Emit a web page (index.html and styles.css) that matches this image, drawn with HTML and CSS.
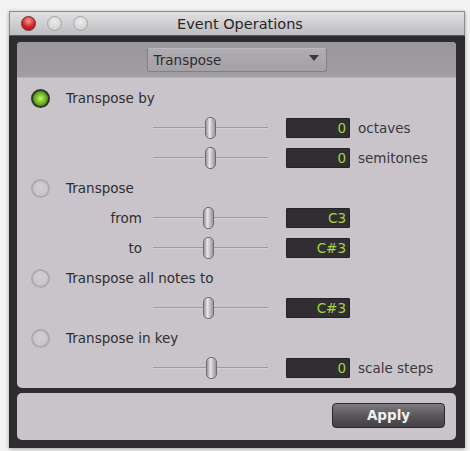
FILE: index.html
```html
<!DOCTYPE html>
<html>
<head>
<meta charset="utf-8">
<link rel="stylesheet" href="styles.css">
</head>
<body>
<div class="window">
  <div class="titlebar">
    <div class="lights">
      <span class="light red"></span>
      <span class="light"></span>
      <span class="light"></span>
    </div>
    <div class="title">Event Operations</div>
  </div>
  <div class="frame">
    <div class="panel">
      <div class="toolbar">
        <div class="dropdown"><span>Transpose</span><span class="arrow"></span></div>
      </div>
      <div class="rows">
        <div class="row head"><span class="radio on"></span><span class="hlabel">Transpose by</span></div>
        <div class="row ctl"><span class="lbl"></span><span class="slider"><span class="thumb"></span></span><span class="val">0</span><span class="unit">octaves</span></div>
        <div class="row ctl"><span class="lbl"></span><span class="slider"><span class="thumb"></span></span><span class="val">0</span><span class="unit">semitones</span></div>
        <div class="row head"><span class="radio"></span><span class="hlabel">Transpose</span></div>
        <div class="row ctl"><span class="lbl">from</span><span class="slider"><span class="thumb t2"></span></span><span class="val">C3</span><span class="unit"></span></div>
        <div class="row ctl"><span class="lbl">to</span><span class="slider"><span class="thumb t2"></span></span><span class="val">C#3</span><span class="unit"></span></div>
        <div class="row head"><span class="radio"></span><span class="hlabel">Transpose all notes to</span></div>
        <div class="row ctl"><span class="lbl"></span><span class="slider"><span class="thumb t2"></span></span><span class="val">C#3</span><span class="unit"></span></div>
        <div class="row head"><span class="radio"></span><span class="hlabel">Transpose in key</span></div>
        <div class="row ctl"><span class="lbl"></span><span class="slider"><span class="thumb t3"></span></span><span class="val">0</span><span class="unit">scale steps</span></div>
      </div>
    </div>
    <div class="footer">
      <button class="apply">Apply</button>
    </div>
  </div>
</div>
</body>
</html>
```

FILE: styles.css
```css
html, body {
  margin: 0;
  padding: 0;
  background: #f3f3f3;
}
body {
  font-family: "DejaVu Sans", "Liberation Sans", sans-serif;
  width: 470px;
  height: 451px;
  overflow: hidden;
}
.window {
  margin: 11px 0 0 9px;
  width: 456px;
  box-shadow: 0 1px 4px rgba(0,0,0,0.35);
}
.titlebar {
  height: 25px;
  box-sizing: border-box;
  border: 1px solid #8c8c8e;
  border-bottom: 1px solid #5a595c;
  background: linear-gradient(#e0dfe1, #bebdc0);
  display: flex;
  align-items: center;
}
.lights {
  display: flex;
  gap: 11px;
  padding-left: 11px;
}
.light {
  width: 15px;
  height: 15px;
  border-radius: 50%;
  background: radial-gradient(circle at 50% 35%, #eeeeee, #c6c5c8);
  border: 1px solid #a5a4a7;
  box-sizing: border-box;
}
.light.red {
  background: radial-gradient(circle at 50% 30%, #ff9a9a, #d0222a 55%, #a31218);
  border-color: #7d2a2c;
}
.title {
  flex: 1;
  text-align: center;
  font-size: 14.5px;
  color: #262528;
  margin-right: 72px;
}
.frame {
  background: #2e2c30;
  padding: 6px 9px 8px 8px;
}
.panel {
  background: #c8c4c9;
  border-radius: 4px 4px 5px 5px;
  overflow: hidden;
}
.toolbar {
  height: 35px;
  background: linear-gradient(#9a979c, #a09da3);
  border-bottom: 1px solid #b6b2b7;
  display: flex;
  align-items: center;
  justify-content: center;
}
.dropdown {
  width: 180px;
  height: 24px;
  box-sizing: border-box;
  border: 1px solid #828085;
  border-top-color: #bcb9be;
  border-radius: 3px;
  background: linear-gradient(#b0adb2, #a4a1a6);
  display: flex;
  align-items: center;
  justify-content: space-between;
  padding: 0 7px 0 6px;
  font-size: 13.5px;
  color: #2e2c30;
}
.arrow {
  width: 0;
  height: 0;
  border-left: 5px solid transparent;
  border-right: 5px solid transparent;
  border-top: 6px solid #3b393e;
  margin-top: -4px;
}
.rows {
  padding: 5px 0 5px 0;
  display: flex;
  flex-direction: column;
}
.row {
  height: 30px;
  display: flex;
  align-items: center;
}
.head {
  padding-left: 14px;
}
.radio {
  width: 19px;
  height: 19px;
  border-radius: 50%;
  box-sizing: border-box;
  border: 2px solid #aeaab0;
  background: radial-gradient(circle at 50% 40%, #d2ced3, #c4c0c5);
}
.radio.on {
  border: 2px solid #2e3a22;
  background: radial-gradient(circle, #c4f07a 0, #84cc2e 35%, #55901c 70%, #36521c 100%);
}
.hlabel {
  margin-left: 16px;
  font-size: 13.5px;
  color: #2f2d31;
}
.lbl {
  width: 125px;
  text-align: right;
  font-size: 13.5px;
  color: #2f2d31;
}
.slider {
  margin-left: 11px;
  width: 115px;
  height: 22px;
  position: relative;
  background: linear-gradient(transparent 10px, #9e9aa1 10px, #9e9aa1 11px, #d3cfd4 11px, #d3cfd4 12px, transparent 12px);
}
.thumb {
  position: absolute;
  left: 52px;
  top: 0;
  width: 11px;
  height: 22px;
  box-sizing: border-box;
  border: 1px solid #6e6b71;
  border-radius: 5px;
  background: linear-gradient(90deg, #9c999e, #e8e5e9 40%, #c9c6cb 60%, #9a979c);
}
.thumb.t2 { left: 50px; }
.thumb.t3 { left: 53px; }
.val {
  margin-left: 18px;
  width: 64px;
  height: 20px;
  box-sizing: border-box;
  background: #302e33;
  border: 1px solid #242226;
  border-radius: 1px;
  color: #a6d244;
  font-size: 13.5px;
  text-align: right;
  padding-right: 3px;
  line-height: 19px;
}
.unit {
  margin-left: 8px;
  font-size: 13.5px;
  color: #3a383c;
}
.footer {
  margin-top: 5px;
  height: 47px;
  background: #c8c4c9;
  border-radius: 5px;
  display: flex;
  align-items: center;
  justify-content: flex-end;
  padding-right: 11px;
}
.apply {
  width: 113px;
  height: 25px;
  margin-top: -3px;
  border: 1px solid #2a282c;
  border-radius: 4px;
  background: linear-gradient(#7e7c81, #5a585d 50%, #424045);
  color: #f0f0f0;
  font-family: "DejaVu Sans", "Liberation Sans", sans-serif;
  font-weight: bold;
  font-size: 13.5px;
  padding: 0;
}
```
